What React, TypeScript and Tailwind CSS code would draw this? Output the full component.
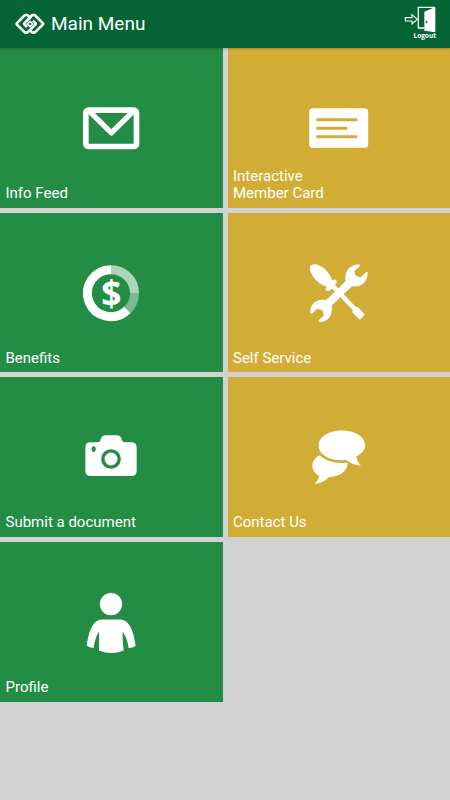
import type { ReactNode } from "react";

function Logo() {
  return (
    <svg
      className="h-[26px] w-[34px]"
      viewBox="0 0 102 78"
      fill="none"
      stroke="#fff"
      strokeWidth="8"
      strokeLinejoin="round"
    >
      <path d="M54 23 L43 12 H36 L11 37 V40 L36 65 H43 L68 40 V37 L60 29" />
      <path d="M48 55 L58 65 H65 L90 40 V37 L65 12 H58 L34 37 V40 L42 48" />
      <path d="M51 31 L59 39 L51 47 L43 39 Z" strokeWidth="5" />
    </svg>
  );
}

function LogoutIcon() {
  return (
    <svg className="h-[30px] w-[32px]" viewBox="0 0 96 90" fill="none">
      <path
        d="M4 38 H24 V29 L40 43 L24 57 V48 H4 Z"
        stroke="#fff"
        strokeWidth="3.5"
      />
      <path d="M62 69 H43 V7 H92" stroke="#fff" strokeWidth="4" />
      <path d="M61 20 L94 6 V82 L61 77 Z" fill="#fff" />
      <ellipse cx="68" cy="51" rx="2.5" ry="4" fill="#046434" />
    </svg>
  );
}

function MailIcon() {
  return (
    <svg className="size-20" viewBox="3 -21.45 240 240" fill="none" stroke="#fff">
      <rect x="47.5" y="45" width="152" height="109" rx="8" strokeWidth="17" />
      <path
        d="M60 50 L124 113 L188 50"
        strokeWidth="16"
        strokeLinejoin="round"
      />
    </svg>
  );
}

function CardIcon() {
  return (
    <svg className="size-20" viewBox="11.25 -21.45 240 240">
      <rect x="42" y="39" width="177" height="119" rx="11" fill="#fff" />
      <path
        d="M63 73.5 H186 M63 99.5 H156 M63 124.5 H186"
        stroke="#d1ad35"
        strokeWidth="9"
      />
    </svg>
  );
}

function BenefitsIcon() {
  return (
    <svg className="size-20" viewBox="3 -7.5 240 240" fill="none">
      <g stroke="#fff" strokeWidth="27">
        <path d="M123 42.5 A70.5 70.5 0 0 1 193.5 113" opacity="0.63" />
        <path d="M193.5 113 A70.5 70.5 0 0 1 172 163.5" opacity="0.4" />
        <path d="M172 163.5 A70.5 70.5 0 1 1 123 42.5" />
      </g>
      <text
        x="124"
        y="150"
        textAnchor="middle"
        fill="#fff"
        className="font-['Open_Sans',sans-serif] text-[106px] font-bold"
      >
        $
      </text>
    </svg>
  );
}

function ToolsIcon() {
  return (
    <svg className="size-20" viewBox="11.25 -7.5 240 240" fill="#fff">
      <path d="M151 77 C146 49 163 24 194 27 L193 33 L177 47 L181 61 L196 66 L212 50 L217 49 C219 77 200 98 170 92 L109 151 C114 180 98 202 71 199 L70 194 L86 180 L82 165 L66 160 L50 175 L45 173 C43 147 64 128 92 134 Z" />
      <path d="M47 29 C59 22 76 29 89 41 C101 52 108 63 111 75 L116 72 C122 71 127 78 123 83 L119 88 L180 153 L187 154 L209 177 L194 193 L172 172 L172 163 L110 99 L102 106 C95 109 88 103 92 97 L94 93 C79 89 64 77 55 65 C45 51 41 37 47 29 Z" />
    </svg>
  );
}

function CameraIcon() {
  return (
    <svg className="size-20" viewBox="3 -25 240 240">
      <path
        d="M62 51 H84 Q90 51 91 45 Q94 30 108 30 H139 Q153 30 156 45 Q158 51 164 51 H184 Q200 51 200 67 V136 Q200 152 184 152 H62 Q46 152 46 136 V67 Q46 51 62 51 Z"
        fill="#fff"
      />
      <circle cx="123" cy="101" r="24.5" fill="none" stroke="#238d45" strokeWidth="10" />
      <rect x="65" y="63" width="12" height="17" rx="6" fill="#238d45" />
    </svg>
  );
}

function ChatIcon() {
  return (
    <svg className="size-20" viewBox="-3.75 -9.5 240 240" fill="#fff">
      <path d="M125 31 C165 31 195 50 195 76 C195 90 184 101 168 109 Q170 124 182 137 Q155 134 137 119 C100 125 55 108 55 76 C55 50 86 31 125 31 Z" />
      <path d="M58 105 C75 122 105 130 142 128 C143 152 120 170 86 171 Q70 188 43 191 Q55 181 57 167 C30 152 29 120 58 105 Z" />
    </svg>
  );
}

function ProfileIcon() {
  return (
    <svg className="size-20" viewBox="3 -9.3 240 240" fill="#fff">
      <circle cx="123" cy="57" r="33.5" />
      <path d="M95 103 H151 C181 105 191 143 197 182 Q188 189 176 189 Q172 159 158 139 Q157 165 161 196 Q124 211 87 196 V139 Q74 160 71 189 Q59 188 50 182 C56 143 66 105 95 103 Z" />
    </svg>
  );
}

type TileProps = {
  label: ReactNode;
  icon: ReactNode;
  color: string;
};

function Tile({ label, icon, color }: TileProps) {
  return (
    <button
      className={`relative flex items-center justify-center text-left ${color}`}
    >
      {icon}
      <span className="absolute bottom-[5px] left-[5.5px] text-[15px] leading-[17.6px]">
        {label}
      </span>
    </button>
  );
}

const GREEN = "bg-[#238d45]";
const GOLD = "bg-[#d1ad35]";

const tiles = [
  { id: "feed", label: "Info Feed", icon: <MailIcon />, color: GREEN },
  {
    id: "card",
    label: (
      <>
        Interactive
        <br />
        Member Card
      </>
    ),
    icon: <CardIcon />,
    color: GOLD,
  },
  { id: "benefits", label: "Benefits", icon: <BenefitsIcon />, color: GREEN },
  { id: "self", label: "Self Service", icon: <ToolsIcon />, color: GOLD },
  { id: "submit", label: "Submit a document", icon: <CameraIcon />, color: GREEN },
  { id: "contact", label: "Contact Us", icon: <ChatIcon />, color: GOLD },
  { id: "profile", label: "Profile", icon: <ProfileIcon />, color: GREEN },
];

export default function App() {
  return (
    <div className="flex h-screen flex-col bg-[#d2d2d2] font-[Roboto,sans-serif] text-white">
      <header className="z-10 flex h-12 shrink-0 items-center bg-[#046434] pr-[14px] pl-[13px] shadow-[0_1px_2px_rgba(0,0,0,0.25)]">
        <Logo />
        <h1 className="ml-[4px] text-[19px] leading-6">Main Menu</h1>
        <button className="ml-auto flex flex-col items-center self-start pt-[5px]">
          <LogoutIcon />
          <span className="-mt-[3px] self-end font-['Open_Sans',sans-serif] text-[6.5px] leading-[8px] font-bold">
            Logout
          </span>
        </button>
      </header>
      <main className="grid grid-cols-2 auto-rows-[159.7px] gap-[5px]">
        {tiles.map((tile) => (
          <Tile key={tile.id} label={tile.label} icon={tile.icon} color={tile.color} />
        ))}
      </main>
    </div>
  );
}
